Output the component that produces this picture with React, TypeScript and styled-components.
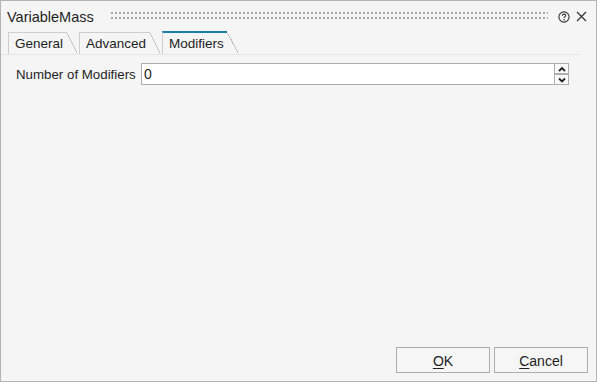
import React from "react";
import styled, {createGlobalStyle, css} from "styled-components";

const GlobalStyle = createGlobalStyle`
  html, body {
    margin: 0;
    padding: 0;
    background: #f5f5f5;
  }
  * {
    box-sizing: border-box;
  }
`

const Window = styled.div`
  width: 597px;
  height: 382px;
  border: 1px solid #b4b4b4;
  background: #f5f5f5;
  display: flex;
  flex-direction: column;
  font-family: "Liberation Sans", Arial, sans-serif;
  color: #1e1e1e;
`
const TitleBar = styled.div`
  height: 31px;
  display: flex;
  align-items: center;
  padding: 0 8px 0 6px;
`
const Title = styled.div`
  font-size: 14.5px;
  margin-right: 17px;
  padding-top: 1px;
`
const Grip = styled.div`
  flex: 1;
  height: 7px;
  margin-top: -2px;
  background-image: conic-gradient(from 270deg at 2px 2px, #a6a6a6 25%, transparent 0);
  background-size: 4px 5px;
`
const IconButton = styled.div<{ $gap?: number }>`
  width: 14px;
  height: 14px;
  display: flex;
  align-items: center;
  justify-content: center;
  margin-left: ${({$gap}) => $gap ?? 3}px;
`
const TabBar = styled.div`
  display: flex;
  align-items: flex-end;
  height: 23px;
  padding-left: 7px;
  margin-right: 16px;
  border-bottom: 1px solid #e4e4e4;
`
const Tab = styled.div<{ $active?: boolean }>`
  position: relative;
  height: 22px;
  padding: 3px 3px 0 6px;
  margin-right: 13px;
  font-size: 13.5px;
  border-left: 1px solid #cdcdcd;
  border-top: 1px solid #cdcdcd;
  background: #f5f5f5;

  &::after {
    content: "";
    position: absolute;
    top: -1px;
    right: -11px;
    width: 11px;
    bottom: 0;
    background: linear-gradient(to top right, #f5f5f5 50%, #c4c4c4 50%, #c4c4c4 calc(50% + 1px), transparent calc(50% + 1px));
  }

  ${({$active}) => $active && css`
    height: 23px;
    padding-top: 3px;
    border-top: 2px solid #1a7fa8;
    &::after {
      top: 0;
    }
  `}
`
const Content = styled.div`
  flex: 1;
  padding: 8px 27px 0 15px;
`
const FieldRow = styled.div`
  display: flex;
  align-items: center;
  height: 22px;
`
const Label = styled.div`
  font-size: 13.3px;
  width: 125px;
`
const Input = styled.div`
  flex: 1;
  height: 22px;
  border: 1px solid #adadad;
  background: #ffffff;
  font-size: 14px;
  padding: 2px 0 0 2px;
`
const Spinner = styled.div`
  width: 14px;
  height: 22px;
  display: flex;
  flex-direction: column;
`
const SpinButton = styled.div`
  flex: 1;
  border: 1px solid #adadad;
  border-left: 0;
  background: #fafafa;
  display: flex;
  align-items: center;
  justify-content: center;
`
const Footer = styled.div`
  display: flex;
  justify-content: flex-end;
  gap: 4px;
  padding: 0 8px 8px 0;
`
const Button = styled.div`
  width: 94px;
  height: 26px;
  border: 1px solid #adadad;
  background: #f6f6f6;
  font-size: 14px;
  display: flex;
  align-items: center;
  justify-content: center;
  padding-top: 1px;
  u {
    text-decoration: underline;
    text-underline-offset: 2px;
  }
`

const HelpIcon = () => (
    <svg width="12" height="12" viewBox="0 0 12 12">
        <circle cx="6" cy="6" r="5.1" fill="none" stroke="#333" strokeWidth="1.1"/>
        <path d="M4.3 4.7 C4.3 3.6 5 3.1 6 3.1 C7 3.1 7.7 3.7 7.7 4.5 C7.7 5.5 6.3 5.6 6.1 6.6 L6.1 7.1"
              fill="none" stroke="#333" strokeWidth="1.1"/>
        <circle cx="6.1" cy="8.7" r="0.75" fill="#333"/>
    </svg>
)

const CloseIcon = () => (
    <svg width="11" height="11" viewBox="0 0 11 11">
        <path d="M1 1 L10 10 M10 1 L1 10" stroke="#333" strokeWidth="1.2"/>
    </svg>
)

const Chevron = ({up}: { up?: boolean }) => (
    <svg width="8" height="6" viewBox="0 0 8 6">
        <path d={up ? "M1 5 L4 2 L7 5" : "M1 1.5 L4 4.5 L7 1.5"} fill="none" stroke="#222" strokeWidth="1.8"/>
    </svg>
)

const tabs = ["General", "Advanced", "Modifiers"]

export default function App() {
    return <>
        <GlobalStyle/>
        <Window>
            <TitleBar>
                <Title>VariableMass</Title>
                <Grip/>
                <IconButton $gap={9}><HelpIcon/></IconButton>
                <IconButton><CloseIcon/></IconButton>
            </TitleBar>
            <TabBar>
                {tabs.map((t) => <Tab key={t} $active={t === "Modifiers"}>{t}</Tab>)}
            </TabBar>
            <Content>
                <FieldRow>
                    <Label>Number of Modifiers</Label>
                    <Input>0</Input>
                    <Spinner>
                        <SpinButton><Chevron up/></SpinButton>
                        <SpinButton><Chevron/></SpinButton>
                    </Spinner>
                </FieldRow>
            </Content>
            <Footer>
                <Button><u>O</u>K</Button>
                <Button><u>C</u>ancel</Button>
            </Footer>
        </Window>
    </>
}
